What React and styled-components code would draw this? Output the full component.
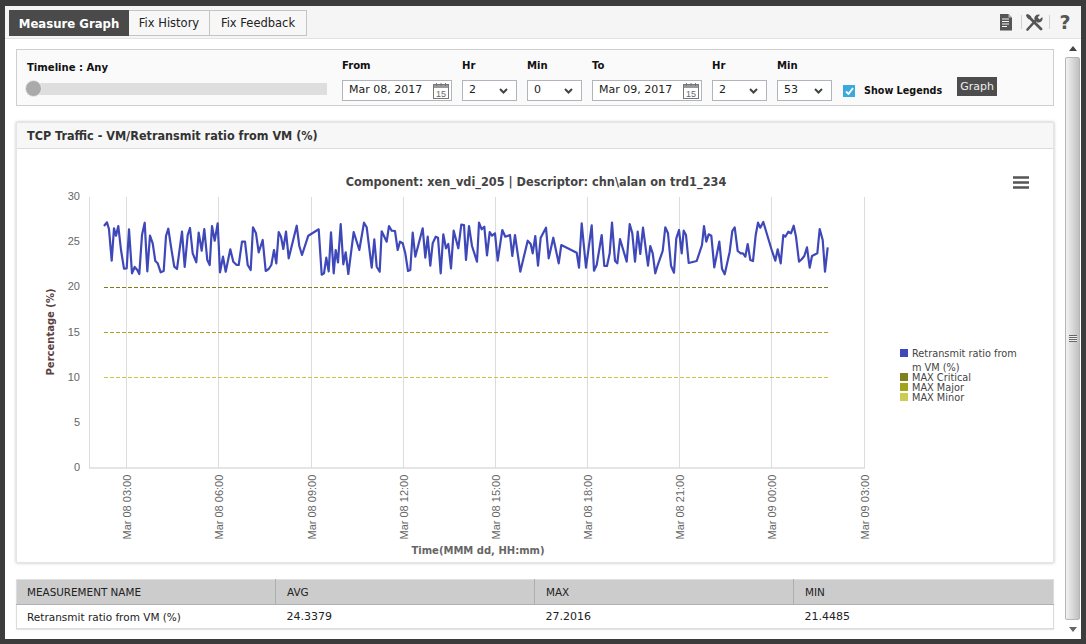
import React from "react";
import styled, { createGlobalStyle } from "styled-components";

const Global = createGlobalStyle`
  html, body { margin: 0; padding: 0; height: 100%; overflow: hidden; background: #3c3c3c; }
  body { font-family: "DejaVu Sans", Verdana, sans-serif; font-size: 11px; color: #222; }
  #root { height: 100%; }
`;

const Frame = styled.div`
  box-sizing: border-box;
  width: 1086px;
  height: 644px;
  border: solid #3c3c3c;
  border-width: 6px 5px 5px 5px;
  background: #fff;
  display: flex;
  flex-direction: column;
`;
const TabBar = styled.div`
  height: 33px;
  flex: none;
  box-sizing: border-box;
  background: #f5f5f5;
  border-bottom: 1px solid #e2e2e2;
  padding: 4px 0 0 4px;
  display: flex;
  align-items: flex-start;
`;
const Tab = styled.div`
  box-sizing: border-box;
  height: 26px;
  width: ${(p) => p.$w}px;
  display: flex;
  align-items: center;
  justify-content: center;
  font-size: ${(p) => (p.$active ? "13px" : "11.5px")};
  font-weight: ${(p) => (p.$active ? 700 : 400)};
  font-stretch: ${(p) => (p.$active ? "condensed" : "normal")};
  color: ${(p) => (p.$active ? "#fff" : "#222")};
  background: ${(p) => (p.$active ? "#4a4a4a" : "#f7f7f7")};
  border: 1px solid ${(p) => (p.$active ? "#4a4a4a" : "#c4c4c4")};
  border-left-width: ${(p) => (p.$first ? "1px" : "0")};
`;
const Tools = styled.div`
  margin-left: auto;
  display: flex;
  align-items: center;
  height: 24px;
  padding-right: 5px;
`;
const ToolRule = styled.span`
  width: 1px;
  height: 14px;
  background: #d0d0d0;
  margin: 0 ${(p) => p.$r}px 0 ${(p) => p.$l}px;
`;
const Help = styled.span`
  font-size: 19px;
  font-weight: 700;
  color: #555;
  width: 22px;
  text-align: center;
  font-family: "DejaVu Sans", sans-serif;
`;
const Body = styled.div`
  flex: 1;
  display: flex;
  min-height: 0;
`;
const Content = styled.div`
  flex: 1;
  box-sizing: border-box;
  padding: 10px 11px 0 11px;
  display: flex;
  flex-direction: column;
`;
const Scrollbar = styled.div`
  width: 16px;
  flex: none;
  background: #fff;
  box-sizing: border-box;
  display: flex;
  flex-direction: column;
  align-items: flex-start;
`;
const Arrow = styled.div`
  height: ${(p) => p.$h}px;
  width: 15px;
  flex: none;
  display: flex;
  align-items: center;
  justify-content: center;
  color: #444;
`;
const Thumb = styled.div`
  flex: 1;
  width: 15px;
  box-sizing: border-box;
  border: 1px solid #b5b5b5;
  border-radius: 2px;
  background: linear-gradient(to right, #f2f2f2, #c0c0c0);
  display: flex;
  align-items: center;
  justify-content: center;
`;
const Grip = styled.div`
  width: 8px;
  height: 7px;
  background: repeating-linear-gradient(to bottom, #666 0 1px, #eee 1px 2px);
`;
const FilterBox = styled.div`
  box-sizing: border-box;
  height: 57px;
  border: 1px solid #cfcfcf;
  background: #fafafa;
  display: flex;
  flex: none;
  padding: 8px 0 0 10px;
`;
const TimelineCol = styled.div`
  width: 300px;
  margin-right: 15px;
  padding-top: 2px;
`;
const Label = styled.div`
  font-weight: 700;
  font-size: 11.2px;
  font-stretch: condensed;
  line-height: 15px;
  color: #111;
  margin-bottom: ${(p) => p.$mb}px;
`;
const Track = styled.div`
  height: 12px;
  background: #dedede;
  position: relative;
`;
const Knob = styled.div`
  position: absolute;
  left: -2px;
  top: -3px;
  width: 15px;
  height: 15px;
  border-radius: 50%;
  background: #aaa;
  border: 1.5px solid #ececec;
`;
const Fields = styled.div`
  display: flex;
  gap: 10px;
`;
const Field = styled.div`
  width: ${(p) => p.$w}px;
`;
const InputBox = styled.div`
  box-sizing: border-box;
  height: 21px;
  border: 1px solid #b0b4bd;
  background: #fff;
  display: flex;
  align-items: center;
  justify-content: space-between;
  padding: 0 2px 0 6px;
  font-size: 11px;
  color: #222;
`;
const BoxText = styled.span`
  position: relative;
  top: -1.5px;
`;
const SelectBox = styled(InputBox)`
  padding: 0 8px 0 6px;
`;
const LegendToggle = styled.div`
  display: flex;
  align-items: center;
  margin-left: 11px;
  height: 21px;
  margin-top: 22px;
`;
const Check = styled.div`
  width: 12px;
  height: 12px;
  background: #3aa9dc;
  display: flex;
  align-items: center;
  justify-content: center;
  margin-right: 9px;
`;
const ToggleText = styled.span`
  font-weight: 700;
  font-size: 10.7px;
  font-stretch: condensed;
  color: #111;
`;
const GraphButton = styled.div`
  margin-left: 15px;
  width: 40px;
  height: 19px;
  margin-top: 19px;
  background: #4d4d4d;
  color: #eee;
  font-size: 11px;
  display: flex;
  align-items: center;
  justify-content: center;
`;
const Panel = styled.div`
  margin-top: 16px;
  box-sizing: border-box;
  height: 441px;
  flex: none;
  background: #fff;
  border: 1px solid #e4e4e4;
  box-shadow: 0 0 3px rgba(0, 0, 0, 0.25);
  display: flex;
  flex-direction: column;
`;
const PanelHead = styled.div`
  height: 26px;
  flex: none;
  box-sizing: border-box;
  background: #f7f7f7;
  border-bottom: 1px solid #dcdcdc;
  padding-left: 10px;
  display: flex;
  align-items: center;
  font-weight: 700;
  font-size: 12.5px;
  font-stretch: condensed;
  color: #333;
`;
const ChartSvg = styled.svg`
  display: block;
  width: 1036px;
  height: 413px;
`;
const Table = styled.table`
  margin-top: 16px;
  width: 1038px;
  border-collapse: collapse;
  table-layout: fixed;
  border: 1px solid #dcdcdc;
  border-top: 1px solid #e0e0e0;
  box-shadow: 0 1px 1px rgba(0, 0, 0, 0.1);
`;
const Th = styled.th`
  height: 24px;
  padding: 0 0 0 ${(p) => (p.$first ? 10 : 11)}px;
  background: #cccccc;
  border-bottom: 1px solid #b0b0b0;
  border-left: ${(p) => (p.$first ? "none" : "1px solid #aeaeae")};
  font-weight: 400;
  font-size: 10.4px;
  color: #222;
  text-align: left;
`;
const Td = styled.td`
  height: 23px;
  padding: 0 0 0 ${(p) => (p.$num ? 11 : 10)}px;
  font-size: ${(p) => (p.$num ? 11 : 10.5)}px;
  color: #222;
  background: #fff;
`;

const DocIcon = () => (
  <svg width="14" height="17" viewBox="0 0 14 17">
    <path d="M1 0H9.5L13 3.5V16.5H1Z" fill="#555" />
    <path d="M9.5 0V3.5H13" fill="#bbb" />
    <path d="M3 5H10M3 7.5H10M3 10H10M3 12.5H8" stroke="#f5f5f5" strokeWidth="1" fill="none" />
  </svg>
);
const ToolsIcon = () => (
  <svg width="17" height="17" viewBox="0 0 17 17">
    <path d="M1.5 15.5L11 5" stroke="#555" strokeWidth="2.6" fill="none" strokeLinecap="round" />
    <path d="M8.5 5.5A4 4 0 0 1 14 .8L11.6 3.4L13.6 5.4L16.2 3A4 4 0 0 1 11.4 8.4Z" fill="#555" />
    <path d="M1.5 1.5L15 15" stroke="#555" strokeWidth="2.8" strokeLinecap="round" />
    <path d="M.5 3L3 .5L5.5 3L3 5.5Z" fill="#555" />
  </svg>
);
const CalIcon = () => (
  <svg width="16" height="17" viewBox="0 0 16 17">
    <rect x="0.5" y="2.5" width="15" height="14" fill="#fff" stroke="#777" />
    <rect x="1" y="3" width="14" height="3" fill="#999" />
    <path d="M3.5 1V4M8 1V4M12.5 1V4" stroke="#777" />
    <text x="8" y="14.5" textAnchor="middle" fontSize="9" fill="#666" fontFamily="Liberation Sans, sans-serif">15</text>
  </svg>
);
const Chevron = () => (
  <svg width="9" height="6" viewBox="0 0 9 6">
    <path d="M1 1L4.5 4.5L8 1" stroke="#444" strokeWidth="2" fill="none" />
  </svg>
);

const toPts = (ox, oy, a) => a.map(([x, y]) => [ox + x / 3, oy + y / 3]);
const seriesA = [[222,168],[231,157],[237,178],[245,272],[252,175],[258,197],[265,168],[273,240],[282,296],[290,295],[297,178],[306,310],[314,291],[322,300],[328,312],[336,195],[344,158],[352,304],[360,197],[368,220],[376,273],[383,280],[392,307],[401,303],[408,198],[415,176],[424,236],[433,290],[441,297],[456,185],[464,291],[473,195],[480,174],[488,250],[499,277],[506,188],[515,242],[523,177],[532,270],[539,285],[546,168],[554,212],[563,160],[570,307],[579,260],[587,305],[601,238],[610,275],[620,285],[626,285],[636,215],[645,215],[653,285],[662,300],[669,172],[678,190],[686,247],[698,210],[707,303],[716,297],[724,285],[732,240],[739,280],[746,186],[753,200],[760,237],[768,185],[776,265],[800,167],[808,228],[816,255],[835,197],[866,178],[875,314],[882,310],[889,263],[896,304]];
const seriesB = [[33,187],[41,310],[47,240],[54,277],[62,162],[70,283],[77,247],[85,312],[101,186],[118,240],[132,158],[140,172],[155,293],[163,208],[170,290],[179,305],[185,184],[200,215],[207,168],[215,182],[225,183],[233,240],[240,215],[248,220],[256,250],[264,303],[271,300],[278,188],[286,260],[308,175],[316,263],[323,200],[331,287],[338,220],[347,200],[354,203],[362,310],[370,193],[378,235],[385,222],[393,295],[401,182],[415,235],[424,164],[432,165],[438,270],[447,168],[456,228],[471,275],[477,158],[485,178],[493,170],[501,256],[509,186],[516,197],[525,190],[533,272],[547,180],[556,200],[570,195],[577,258],[585,195],[601,305],[623,212],[632,222],[638,250],[646,198],[654,287],[662,203],[678,173],[686,265],[700,203],[716,280],[724,225],[770,248]];
const seriesC = [[27,293],[35,160],[48,293],[65,166],[72,302],[80,285],[95,195],[103,288],[111,288],[119,250],[126,158],[135,272],[142,280],[150,207],[170,275],[179,162],[187,190],[195,275],[203,185],[211,252],[219,173],[234,287],[241,228],[248,250],[256,310],[264,283],[278,243],[286,172],[294,190],[303,287],[312,308],[319,205],[327,180],[335,250],[341,182],[348,195],[356,279],[380,273],[396,225],[402,168],[409,215],[416,193],[424,197],[433,292],[448,215],[456,296],[464,313],[479,245],[487,183],[494,172],[503,243],[512,250],[519,250],[526,260],[533,222],[541,270],[549,273],[557,195],[564,158],[571,173],[580,156],[605,240],[616,272],[623,238],[632,280],[640,195],[646,200],[655,185],[663,190],[671,167],[678,200],[687,275],[695,268],[703,258],[711,232],[719,293],[726,258],[742,250],[749,177],[758,210],[765,305],[773,232]];
const line = [...toPts(30, 170, seriesA), ...toPts(320, 170, seriesB), ...toPts(570, 170, seriesC)]
  .map(([x, y]) => `${x.toFixed(1)},${y.toFixed(1)}`)
  .join(" ");

const gridX = [126.5, 218.5, 311.5, 403.5, 495.5, 587.5, 679.5, 771.5, 864.5];
const xLabels = ["Mar 08 03:00","Mar 08 06:00","Mar 08 09:00","Mar 08 12:00","Mar 08 15:00","Mar 08 18:00","Mar 08 21:00","Mar 09 00:00","Mar 09 03:00"];
const yTicks = [["30",196],["25",241],["20",286],["15",332],["10",377],["5",422],["0",467]];
const thresholds = [[287.5,"#7d7d1a"],[332.5,"#a8a820"],[377.5,"#c8c840"]];
const legend = [["MAX Critical",377,"#80801f"],["MAX Major",387,"#a4a41c"],["MAX Minor",397,"#cccc55"]];
const sans = "Liberation Sans, Arial, sans-serif";
const deja = "DejaVu Sans, sans-serif";

const Chart = () => (
  <ChartSvg viewBox="17 149 1036 413">
    <line x1="89.5" y1="197" x2="89.5" y2="468" stroke="#ddd" />
    <line x1="89" y1="468" x2="865" y2="468" stroke="#ddd" strokeWidth="1.5" />
    {gridX.map((x) => <line key={x} x1={x} y1="197" x2={x} y2="468" stroke="#dcdcdc" />)}
    {yTicks.map(([t, y]) => (
      <text key={t} x="80" y={y + 4} textAnchor="end" fontSize="11" fill="#666" fontFamily={sans}>{t}</text>
    ))}
    {xLabels.map((t, i) => (
      <text key={t} transform={`translate(${gridX[i] + 4} 539.5) rotate(-90)`} fontSize="11" fill="#666" fontFamily={sans}>{t}</text>
    ))}
    {thresholds.map(([y, c]) => (
      <line key={y} x1="104" y1={y} x2="828" y2={y} stroke={c} strokeDasharray="4 2" />
    ))}
    <polyline points={line} fill="none" stroke="#3f48b8" strokeWidth="2.2" strokeLinejoin="round" />
    <text x="536" y="186" textAnchor="middle" fontSize="12.6" fontWeight="700" fontStretch="condensed" fill="#444" fontFamily={deja}>Component: xen_vdi_205 | Descriptor: chn\alan on trd1_234</text>
    <text transform="translate(54 332) rotate(-90)" textAnchor="middle" fontSize="10" fontWeight="700" fill="#5a4040" fontFamily={deja}>Percentage (%)</text>
    <text x="478" y="554" textAnchor="middle" fontSize="10" fontWeight="700" fill="#666" fontFamily={deja}>Time(MMM dd, HH:mm)</text>
    <path d="M1013 177.5H1029M1013 182.5H1029M1013 187.5H1029" stroke="#555" strokeWidth="2.4" />
    <rect x="900" y="349" width="8" height="8" fill="#3f48b8" />
    <text x="912" y="357" fontSize="9.75" fill="#444" fontFamily={deja}>Retransmit ratio from</text>
    <text x="912" y="371" fontSize="9.75" fill="#444" fontFamily={deja}>m VM (%)</text>
    {legend.map(([t, y, c]) => (
      <g key={t}>
        <rect x="900" y={y - 4} width="8" height="8" fill={c} />
        <text x="912" y={y + 4} fontSize="9.75" fill="#444" fontFamily={deja}>{t}</text>
      </g>
    ))}
  </ChartSvg>
);

const Select = ({ value }) => (
  <SelectBox>
    <BoxText>{value}</BoxText>
    <Chevron />
  </SelectBox>
);
const DateInput = ({ value }) => (
  <InputBox>
    <BoxText>{value}</BoxText>
    <CalIcon />
  </InputBox>
);

export default function App() {
  return (
    <>
      <Global />
      <Frame>
        <TabBar>
          <Tab $w={120} $active $first>Measure Graph</Tab>
          <Tab $w={81}>Fix History</Tab>
          <Tab $w={97}>Fix Feedback</Tab>
          <Tools>
            <DocIcon />
            <ToolRule $l={8} $r={4} />
            <ToolsIcon />
            <ToolRule $l={6} $r={4} />
            <Help>?</Help>
          </Tools>
        </TabBar>
        <Body>
          <Content>
            <FilterBox>
              <TimelineCol>
                <Label $mb={8}>Timeline : Any</Label>
                <Track><Knob /></Track>
              </TimelineCol>
              <Fields>
                <Field $w={110}><Label $mb={7}>From</Label><DateInput value="Mar 08, 2017" /></Field>
                <Field $w={55}><Label $mb={7}>Hr</Label><Select value="2" /></Field>
                <Field $w={55}><Label $mb={7}>Min</Label><Select value="0" /></Field>
                <Field $w={110}><Label $mb={7}>To</Label><DateInput value="Mar 09, 2017" /></Field>
                <Field $w={55}><Label $mb={7}>Hr</Label><Select value="2" /></Field>
                <Field $w={55}><Label $mb={7}>Min</Label><Select value="53" /></Field>
              </Fields>
              <LegendToggle>
                <Check>
                  <svg width="9" height="8" viewBox="0 0 9 8"><path d="M1 4.5L3.5 7L8 1" stroke="#fff" strokeWidth="1.8" fill="none" /></svg>
                </Check>
                <ToggleText>Show Legends</ToggleText>
              </LegendToggle>
              <GraphButton>Graph</GraphButton>
            </FilterBox>
            <Panel>
              <PanelHead>TCP Traffic - VM/Retransmit ratio from VM (%)</PanelHead>
              <Chart />
            </Panel>
            <Table>
              <colgroup>
                <col style={{ width: 259 }} />
                <col style={{ width: 259 }} />
                <col style={{ width: 259 }} />
                <col />
              </colgroup>
              <thead>
                <tr>
                  <Th $first>MEASUREMENT NAME</Th>
                  <Th>AVG</Th>
                  <Th>MAX</Th>
                  <Th>MIN</Th>
                </tr>
              </thead>
              <tbody>
                <tr>
                  <Td>Retransmit ratio from VM (%)</Td>
                  <Td $num>24.3379</Td>
                  <Td $num>27.2016</Td>
                  <Td $num>21.4485</Td>
                </tr>
              </tbody>
            </Table>
          </Content>
          <Scrollbar>
            <Arrow $h={18}><svg width="8" height="5" viewBox="0 0 8 5"><path d="M0 5L4 0L8 5Z" fill="#444" /></svg></Arrow>
            <Thumb><Grip /></Thumb>
            <Arrow $h={19}><svg width="8" height="5" viewBox="0 0 8 5"><path d="M0 0L4 5L8 0Z" fill="#666" /></svg></Arrow>
          </Scrollbar>
        </Body>
      </Frame>
    </>
  );
}
